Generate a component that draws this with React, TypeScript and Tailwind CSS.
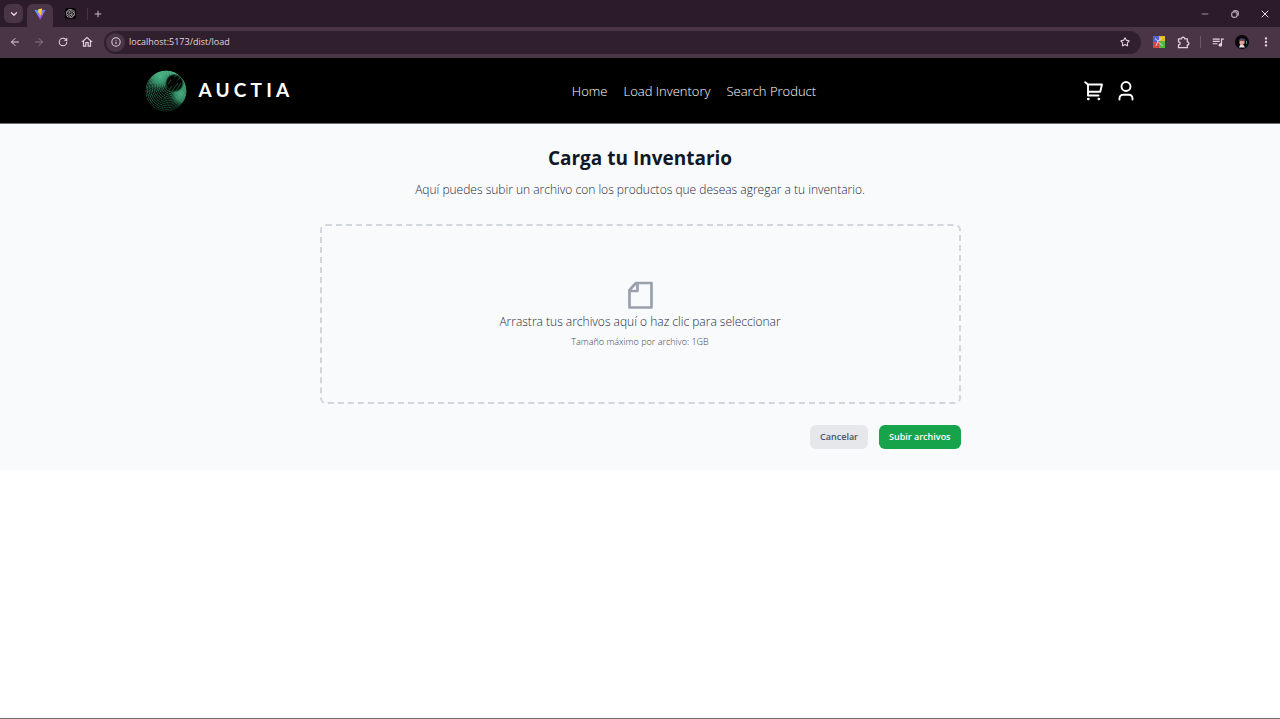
import type { ReactNode } from "react";
import { ArrowLeft, ArrowRight, ChevronDown, Info, Minus, Plus, RotateCw, Star, X } from "lucide-react";
import { MdOutlineHome, MdQueueMusic, MdMoreVert } from "react-icons/md";
import { SiOpenai } from "react-icons/si";

function IconButton({ label, className, children }: { label: string; className: string; children: ReactNode }) {
  return (
    <button type="button" aria-label={label} className={`flex shrink-0 items-center justify-center ${className}`}>
      {children}
    </button>
  );
}

function ViteIcon() {
  return (
    <svg viewBox="0 0 32 32" className="size-3">
      <defs>
        <linearGradient id="viteBody" x1="0" y1="0" x2="0.6" y2="1">
          <stop offset="0" stopColor="#41b8ff" />
          <stop offset="1" stopColor="#b83dfb" />
        </linearGradient>
        <linearGradient id="viteBolt" x1="0" y1="0" x2="0" y2="1">
          <stop offset="0" stopColor="#ffe45c" />
          <stop offset="1" stopColor="#ffa51f" />
        </linearGradient>
      </defs>
      <path d="M1 4.500 16 7l15-2.500L16.600 31Z" fill="url(#viteBody)" />
      <path d="M22 1 11.500 3.100 11 13.500l3.200-.7-1 4.500 2.600-.8-1.700 7.500L23 12.500l-4 .8L22 1Z" fill="url(#viteBolt)" />
    </svg>
  );
}

function ColorTilesIcon() {
  return (
    <svg viewBox="0 0 12 12" className="size-3">
      <path fill="#4f63d8" d="M0 0h6v6H0z" />
      <path fill="#e8b92e" d="M6 0h6v5H6z" />
      <path fill="#d9443f" d="M0 6h6v6H0z" />
      <path fill="#52b848" d="M6 5h6v7H6z" />
      <path d="M2 2.500 5 5l4-3M5 5l-2 5M5.500 6.500l4 3" stroke="#f3dfe8" strokeWidth="0.900" fill="none" />
    </svg>
  );
}

function Avatar() {
  return (
    <svg viewBox="0 0 14 14" className="size-3.5">
      <circle cx="7" cy="7" r="7" fill="#08050b" />
      <path d="M4.500 5.500h5v3l-2 1.500h-2l-1-1.500z" fill="#dca892" />
      <path d="M3.500 5.500 6 3l4 1 .5 2-3-.8z" fill="#54406a" />
      <path d="M4 12.500 5 10h3.500l1.500 2.500z" fill="#e6dce4" />
      <path d="M11.500 6v3" stroke="#2b8f99" />
    </svg>
  );
}

function TabStrip() {
  return (
    <div className="flex h-[27px] items-center bg-[#2c1b29] text-[#e7d8e3]">
      <IconButton label="Search tabs" className="ml-1 size-[19px] rounded-md bg-[#4a3546]">
        <ChevronDown className="size-2.5" strokeWidth={3} />
      </IconButton>
      <div role="tablist" className="ml-1 flex h-full items-end">
        <button type="button" role="tab" aria-selected="true" aria-label="Auctia" className="flex h-[23px] w-[26px] items-center justify-center rounded-t-md bg-[#4a3546] pb-1">
          <ViteIcon />
        </button>
        <button type="button" role="tab" aria-selected="false" aria-label="ChatGPT" className="flex h-[23px] w-[34px] items-center justify-center pb-1">
          <span className="flex size-[11px] items-center justify-center rounded-xs bg-black">
            <SiOpenai className="size-[9px]" />
          </span>
        </button>
      </div>
      <span className="h-3 w-px bg-[#4a3546]" />
      <IconButton label="New tab" className="ml-0.5 size-4">
        <Plus className="size-2.5" />
      </IconButton>
      <div className="ml-auto flex h-full items-center gap-3.5 pr-[7px]">
        <IconButton label="Minimize" className="size-4">
          <Minus className="size-2.5" strokeWidth={1.500} />
        </IconButton>
        <IconButton label="Restore" className="size-4">
          <svg viewBox="0 0 10 10" className="size-2" fill="none" stroke="currentColor" strokeWidth="1.200">
            <rect x="1" y="2.500" width="6.500" height="6.500" rx="1.500" />
            <path d="M3 1h4.500A1.700 1.700 0 0 1 9 2.700V7" />
          </svg>
        </IconButton>
        <IconButton label="Close" className="size-4">
          <X className="size-3" strokeWidth={2} />
        </IconButton>
      </div>
    </div>
  );
}

function Toolbar() {
  return (
    <div className="flex h-[31px] items-center bg-[#4a3546] pb-px text-[#e3d2de]">
      <div className="flex w-[104px] items-center gap-2 pl-[7px]">
        <IconButton label="Back" className="size-4">
          <ArrowLeft className="size-3" />
        </IconButton>
        <IconButton label="Forward" className="size-4 text-[#8e7489]">
          <ArrowRight className="size-3" />
        </IconButton>
        <IconButton label="Reload" className="size-4">
          <RotateCw className="size-2.5" strokeWidth={2.500} />
        </IconButton>
        <IconButton label="Home page" className="size-4">
          <MdOutlineHome className="size-3.5" />
        </IconButton>
      </div>
      <form className="flex h-[23px] min-w-0 flex-1 items-center gap-1 rounded-full bg-[#301f2d] pr-2 pl-0.5">
        <IconButton label="Site information" className="size-[19px] rounded-full bg-[#4a3546]">
          <Info className="size-2.5" strokeWidth={2.500} />
        </IconButton>
        <input
          aria-label="Address"
          defaultValue="localhost:5173/dist/load"
          className="min-w-0 flex-1 bg-transparent text-[9px] leading-4 outline-none"
        />
        <IconButton label="Bookmark" className="size-4">
          <Star className="size-2.5" strokeWidth={2.500} />
        </IconButton>
      </form>
      <div className="ml-2.5 flex items-center gap-2 pr-1.5">
        <IconButton label="Color tiles" className="size-4">
          <ColorTilesIcon />
        </IconButton>
        <IconButton label="Extensions" className="size-4">
          <svg viewBox="0 0 13 13" className="size-[13px]" fill="none" stroke="currentColor" strokeWidth="1.300" strokeLinejoin="round">
            <path d="M1.500 2.800h3a1.600 1.600 0 0 1 3.200 0h2.600v3a1.600 1.600 0 0 1 0 3.200v2.700H1.500V9a1.600 1.600 0 0 0 0-3.200Z" />
          </svg>
        </IconButton>
        <span className="mx-px h-3 w-px bg-[#6f5569]" />
        <IconButton label="Media" className="size-4">
          <MdQueueMusic className="size-3.5" />
        </IconButton>
        <IconButton label="Profile" className="size-4">
          <Avatar />
        </IconButton>
        <IconButton label="Menu" className="size-4">
          <MdMoreVert className="size-3.5" />
        </IconButton>
      </div>
    </div>
  );
}

const rings = Array.from({ length: 13 }, (_, i) => ({
  cx: 21 + i * 0.6,
  cy: 21 - i * 0.7,
  r: 20.2 - i * 1.05,
}));

function AuctiaMark() {
  return (
    <svg viewBox="0 0 42 42" className="size-[42px]">
      <defs>
        <radialGradient id="topGlow" cx="0.36" cy="0.14" r="0.38">
          <stop offset="0" stopColor="#4fc08e" stopOpacity="0.95" />
          <stop offset="0.5" stopColor="#43ab7c" stopOpacity="0.7" />
          <stop offset="1" stopColor="#1c5a40" stopOpacity="0" />
        </radialGradient>
        <radialGradient id="sideGlow" cx="0.9" cy="0.58" r="0.34">
          <stop offset="0" stopColor="#5ad19c" />
          <stop offset="0.5" stopColor="#43ab7c" stopOpacity="0.85" />
          <stop offset="1" stopColor="#1c5a40" stopOpacity="0" />
        </radialGradient>
        <radialGradient id="hollow" cx="0.5" cy="0.5" r="0.5">
          <stop offset="0" stopColor="#020705" />
          <stop offset="0.75" stopColor="#020705" />
          <stop offset="1" stopColor="#020705" stopOpacity="0" />
        </radialGradient>
        <linearGradient id="ringFade" gradientUnits="userSpaceOnUse" x1="6" y1="4" x2="28" y2="42">
          <stop offset="0" stopColor="#4fc08e" />
          <stop offset="0.6" stopColor="#3ba073" />
          <stop offset="1" stopColor="#1b4f39" />
        </linearGradient>
        <clipPath id="sphereClip">
          <circle cx="21" cy="21" r="20.500" />
        </clipPath>
      </defs>
      <g clipPath="url(#sphereClip)">
        <circle cx="21" cy="21" r="20.500" fill="url(#topGlow)" />
        <circle cx="21" cy="21" r="20.500" fill="url(#sideGlow)" />
        {rings.map((ring) => (
          <circle key={ring.r} cx={ring.cx} cy={ring.cy} r={ring.r} fill="none" stroke="url(#ringFade)" strokeWidth="0.700" strokeDasharray="2.200 0.500" />
        ))}
        <ellipse cx="29.500" cy="13" rx="9.500" ry="9.500" fill="url(#hollow)" />
        <path d="m24 20 3-4m0 5 6-8m-3 9 6-9M23 14l3-4m3-3 3-2m1 5 3-4" stroke="#2f7d5a" strokeWidth="0.600" />
      </g>
    </svg>
  );
}

function CartIcon() {
  return (
    <svg viewBox="0 0 20 20" className="size-5" fill="none" stroke="currentColor" strokeWidth="1.900" strokeLinecap="round" strokeLinejoin="round">
      <path d="M1.200 1.200 4 3.500v11h10.500M4 3.500h14l-1.800 7.200H4" />
      <circle cx="4.200" cy="18" r="0.900" fill="currentColor" strokeWidth="1" />
      <circle cx="14.800" cy="18" r="0.900" fill="currentColor" strokeWidth="1" />
    </svg>
  );
}

function UserIcon() {
  return (
    <svg viewBox="0 0 20 20" className="size-5" fill="none" stroke="currentColor" strokeWidth="1.900" strokeLinecap="round">
      <circle cx="10" cy="5.500" r="4.500" />
      <path d="M3.500 18.500v-1.200a3.600 3.600 0 0 1 3.600-3.600h5.800a3.600 3.600 0 0 1 3.600 3.600v1.200" />
    </svg>
  );
}

function SiteHeader() {
  return (
    <header className="border-b border-neutral-500 bg-black text-white">
      <div className="mx-auto flex h-[65px] max-w-[991px] items-center justify-between">
        <a href="/" className="flex w-[160px] items-center gap-3">
          <AuctiaMark />
          <span className="font-[Lato,sans-serif] text-[19px] font-bold tracking-[0.220em]">AUCTIA</span>
        </a>
        <nav className="flex gap-4 text-[13px] leading-5 font-[350]">
          <a href="/dist/">Home</a>
          <a href="/dist/load">Load Inventory</a>
          <a href="/dist/search">Search Product</a>
        </nav>
        <div className="flex items-center gap-3">
          <button type="button" aria-label="Cart">
            <CartIcon />
          </button>
          <button type="button" aria-label="Account">
            <UserIcon />
          </button>
        </div>
      </div>
    </header>
  );
}

function UploadSection() {
  return (
    <main className="bg-gray-50 px-5 pt-5 pb-[21px]">
      <div className="mx-auto max-w-[641px]">
        <h1 className="text-center text-[19px] leading-7 font-bold text-gray-900">Carga tu Inventario</h1>
        <p className="mt-2 text-center text-xs leading-5 font-light text-gray-800">
          Aquí puedes subir un archivo con los productos que deseas agregar a tu inventario.
        </p>
        <button
          type="button"
          className="mt-6 flex w-full flex-col items-center rounded-md border-2 border-dashed border-gray-300 py-[52px]"
        >
          <svg viewBox="0 0 32 32" className="size-8 text-gray-400" fill="none" stroke="currentColor" strokeWidth="2.700" strokeLinejoin="round">
            <path d="M12 5h15.500v24.500h-22V12L12 5Zm1.500 0v8h-8" />
          </svg>
          <span className="mt-0.5 text-xs leading-5 font-light text-gray-800">Arrastra tus archivos aquí o haz clic para seleccionar</span>
          <span className="mt-0.5 text-[9px] leading-4 font-light text-gray-700">Tamaño máximo por archivo: 1GB</span>
        </button>
        <div className="mt-[21px] flex justify-end gap-[11px]">
          <button type="button" className="rounded-md bg-gray-200 px-2.5 py-1 text-[9px] leading-4 font-semibold text-gray-600">
            Cancelar
          </button>
          <button type="button" className="rounded-md bg-[#16a34a] px-2.5 py-1 text-[9px] leading-4 font-semibold text-white">
            Subir archivos
          </button>
        </div>
      </div>
    </main>
  );
}

export default function App() {
  return (
    <div className="flex min-h-screen flex-col border-b border-neutral-500 bg-white font-['Open_Sans','Noto_Sans',sans-serif]">
      <TabStrip />
      <Toolbar />
      <SiteHeader />
      <UploadSection />
    </div>
  );
}
